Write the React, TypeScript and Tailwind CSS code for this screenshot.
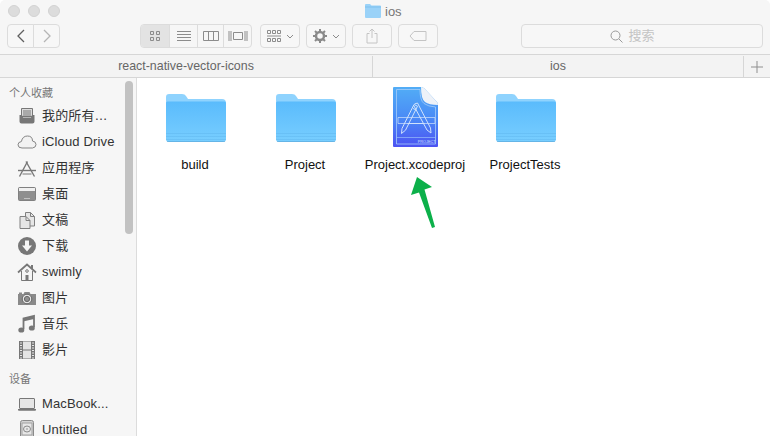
import type { ReactNode } from "react";

const cjk = "font-['Liberation_Sans','Noto_Sans_CJK_SC',sans-serif]";

function Folder() {
    return (
        <svg className="mt-[7px] ml-[2px]" width="60" height="48" viewBox="0 0 60 48">
            <defs>
                <linearGradient id="fb" x1="0" y1="0" x2="0" y2="1">
                    <stop offset="0" stopColor="#5abbfc" />
                    <stop offset="1" stopColor="#78ceff" />
                </linearGradient>
            </defs>
            <path d="M0 3q0-3 3-3h13q3 0 4 2l2 3h34q4 0 4 4v5H0z" fill="#8fd3fe" />
            <path d="M0 9q0-1.500 1.500-1.500h57q1.500 0 1.500 1.500v36q0 3-3 3H3q-3 0-3-3z" fill="url(#fb)" />
            <path d="M0 39.500h60M0 42.500h60M0 45.500h60" stroke="#5fb8ef" strokeWidth="0.800" opacity="0.600" />
            <path d="M1 47.500h58" stroke="#5aa6d8" strokeWidth="1" opacity="0.600" />
        </svg>
    );
}

function XcodeProj() {
    return (
        <svg className="ml-[1px]" width="46" height="60" viewBox="0 0 46 60">
            <defs>
                <linearGradient id="xg" x1="0" y1="0" x2="0" y2="1">
                    <stop offset="0" stopColor="#52adf6" />
                    <stop offset="0.500" stopColor="#4a8cf6" />
                    <stop offset="1" stopColor="#4c52f2" />
                </linearGradient>
            </defs>
            <path d="M1 0h27q2 0 3.500 1.500L44 15q1 1 1 3v41q0 1-1 1H1q-1 0-1-1V1q0-1 1-1z" fill="url(#xg)" />
            <path d="M28 0q2 0 3.500 1.500L44 15q1 1 1 3-9 0-13-3t-4-15z" fill="#eef2f8" />
            <path d="M3.500 2.500H27q0 11 4 14t11.500 3.500v37h-39z" stroke="#a5cdfa" strokeWidth="0.800" fill="none" />
            <path d="M3.500 50.500h39" stroke="#a5cdfa" strokeWidth="0.600" />
            <g stroke="#d0e2fc" strokeWidth="1" fill="none">
                <path d="M5 30.500h37v6H5z" opacity="0.700" />
                <path d="M8.500 46.500l.500-5 12-24 3.500 1.700-12 24z" />
                <path d="M20 21.500l3.500 1.700" />
                <path d="M21.500 17l3-1 13 25 .500 5-4-3-13-24" />
                <path d="M14.500 36.500h17" />
            </g>
            <text x="42.500" y="55.500" textAnchor="end" fontSize="3.800" fontFamily="Liberation Sans" fill="#cfe0ff">PROJECT</text>
        </svg>
    );
}

const sidebarIcons: Record<string, ReactNode> = {
    all: (
        <svg width="20" height="20" viewBox="0 0 20 20">
            <path d="M4.500 2.500h11v8h-11z" fill="#dcdcdc" stroke="#777" />
            <path d="M6 5h8M6 7h8M6 9h8" stroke="#777" />
            <path d="M2.500 9h2.500l1 2.500h8l1-2.500h2.500v6.500q0 2-2 2h-11q-2 0-2-2z" fill="#777" />
        </svg>
    ),
    cloud: (
        <svg width="20" height="20" viewBox="0 0 20 20">
            <path d="M5 16q-4 0-4-3.200 0-2.800 3.400-3.300Q5.500 4 10.500 4t5 5q3.500.500 3.500 3.500 0 3-3.500 3.500z" fill="#f2f2f2" stroke="#858585" />
        </svg>
    ),
    apps: (
        <svg width="20" height="20" viewBox="0 0 20 20">
            <g stroke="#777" fill="none" strokeWidth="1.400">
                <path d="M1 12.500h18" />
                <path d="M2.500 18.500l8-15" />
                <path d="M9 3.500l8.500 15" />
                <path d="M5.500 16h9" strokeWidth="1" />
            </g>
        </svg>
    ),
    desktop: (
        <svg width="20" height="20" viewBox="0 0 20 20">
            <rect x="1.500" y="3.500" width="17" height="13" rx="1" fill="#8f8f8f" stroke="#808080" />
            <rect x="2" y="4" width="16" height="3" fill="#f0f0f0" />
            <path d="M7.500 14.500h1M9.500 14.500h1M11.500 14.500h1" stroke="#f5f5f5" />
        </svg>
    ),
    docs: (
        <svg width="20" height="20" viewBox="0 0 20 20">
            <path d="M8.500 2.500h5l4 4v9.500h-9z" fill="#e6e6e6" stroke="#808080" />
            <path d="M3 6.500h6l4 4v8H3z" fill="#e6e6e6" stroke="#808080" />
            <path d="M13.500 2.500v4h4M9 6.500v4h4" fill="none" stroke="#808080" />
        </svg>
    ),
    download: (
        <svg width="20" height="20" viewBox="0 0 20 20">
            <circle cx="10" cy="10" r="9" fill="#777" />
            <path d="M8 4.500h4v5h3l-5 6-5-6h3z" fill="#f6f6f6" />
        </svg>
    ),
    home: (
        <svg width="20" height="20" viewBox="0 0 20 20">
            <path d="M4.500 9v9.500h11V9" fill="#f4f4f4" stroke="#777" />
            <path d="M1 10.500l9-8 9 8" fill="none" stroke="#777" strokeWidth="1.700" />
            <path d="M14 3h2v4h-2z" fill="#777" />
            <path d="M8.500 13h3v5.500h-3z" fill="#777" />
            <circle cx="10" cy="9" r="1.300" fill="none" stroke="#777" />
        </svg>
    ),
    photo: (
        <svg width="20" height="20" viewBox="0 0 20 20">
            <path d="M1 6h1V4.500h3V6h1.500l1-2h5l1 2H19v11H1z" fill="#8a8a8a" />
            <circle cx="10" cy="11" r="4.800" fill="#e4e4e4" stroke="#666" />
            <circle cx="10" cy="11" r="2.600" fill="#909090" stroke="#666" />
        </svg>
    ),
    music: (
        <svg width="20" height="20" viewBox="0 0 20 20">
            <path d="M6.500 15V4.500l10.500-2.500v11" fill="none" stroke="#777" strokeWidth="1.800" />
            <path d="M6 4.500l11-2.500v3L6 7.500z" fill="#777" />
            <ellipse cx="4.300" cy="16" rx="3" ry="2.600" fill="#777" />
            <ellipse cx="14.800" cy="14" rx="3" ry="2.600" fill="#777" />
        </svg>
    ),
    film: (
        <svg width="20" height="20" viewBox="0 0 20 20">
            <rect x="2" y="1" width="16" height="18" fill="#777" />
            <path d="M6 1.500h8v8H6zM6 10.500h8v8H6z" fill="#e4e4e4" />
            <path d="M3 3h2M3 5.500h2M3 8h2M3 10.500h2M3 13h2M3 15.500h2M3 18h2M15 3h2M15 5.500h2M15 8h2M15 10.500h2M15 13h2M15 15.500h2M15 18h2" stroke="#e8e8e8" />
        </svg>
    ),
    laptop: (
        <svg width="20" height="20" viewBox="0 0 20 20">
            <rect x="2.500" y="4.500" width="15" height="10" rx="0.500" fill="#e6e6e6" stroke="#777" />
            <path d="M1 15h18v1q0 .800-1 .800H2q-1 0-1-.800z" fill="#777" />
        </svg>
    ),
    disk: (
        <svg width="20" height="20" viewBox="0 0 20 20">
            <rect x="3.500" y="0.500" width="13" height="21" rx="2" fill="#d4d4d4" stroke="#8a8a8a" />
            <rect x="5" y="3" width="10" height="12" fill="#e6e6e6" stroke="#a0a0a0" />
            <ellipse cx="10" cy="9" rx="3.500" ry="3" fill="none" stroke="#8a8a8a" />
            <circle cx="10" cy="9" r="0.800" fill="#8a8a8a" />
        </svg>
    ),
};

const favorites = [
    { icon: "all", label: "我的所有…" },
    { icon: "cloud", label: "iCloud Drive" },
    { icon: "apps", label: "应用程序" },
    { icon: "desktop", label: "桌面" },
    { icon: "docs", label: "文稿" },
    { icon: "download", label: "下载" },
    { icon: "home", label: "swimly" },
    { icon: "photo", label: "图片" },
    { icon: "music", label: "音乐" },
    { icon: "film", label: "影片" },
];

const devices = [
    { icon: "laptop", label: "MacBook..." },
    { icon: "disk", label: "Untitled" },
];

function SidebarRow({ icon, label }: { icon: string; label: string }) {
    return (
        <div className="flex h-[26px] shrink-0 items-center pl-[17px]">
            <span className="flex w-[25px] shrink-0">{sidebarIcons[icon]}</span>
            <span className="text-[13px] tracking-[0.15px] whitespace-nowrap text-[#333]">{label}</span>
        </div>
    );
}

function ToolButton({ className, children }: { className: string; children: ReactNode }) {
    return (
        <div className={`flex h-6 items-center justify-center rounded-[4px] border border-[#dcdcdc] bg-[#f7f7f7] ${className}`}>
            {children}
        </div>
    );
}

function Toolbar() {
    return (
        <div className="flex h-[32px] items-start pt-[2px] pl-[7px]">
            <div className="flex">
                <ToolButton className="w-[27px] rounded-r-none">
                    <svg width="12" height="16" viewBox="0 0 12 16"><path d="M9 2L3 8l6 6" fill="none" stroke="#5f5f5f" strokeWidth="1.300" /></svg>
                </ToolButton>
                <ToolButton className="ml-[-1px] w-[27px] rounded-l-none">
                    <svg width="12" height="16" viewBox="0 0 12 16"><path d="M3 2l6 6-6 6" fill="none" stroke="#b5b5b5" strokeWidth="1.300" /></svg>
                </ToolButton>
            </div>

            <div className="ml-[80px] flex h-6 w-[112px] overflow-hidden rounded-[4px] border border-[#dcdcdc]">
                <div className="flex w-[28px] items-center justify-center bg-[#e3e3e3]">
                    <svg width="12" height="12" viewBox="0 0 12 12"><path d="M1.500 1.500h3v3h-3zM7.500 1.500h3v3h-3zM1.500 7.500h3v3h-3zM7.500 7.500h3v3h-3z" fill="none" stroke="#8c8c8c" /></svg>
                </div>
                <div className="flex w-[28px] items-center justify-center border-l border-[#dcdcdc]">
                    <svg width="16" height="12" viewBox="0 0 16 12"><path d="M1 1.500h14M1 4.500h14M1 7.500h14M1 10.500h14" stroke="#8c8c8c" /></svg>
                </div>
                <div className="flex w-[26px] items-center justify-center border-l border-[#dcdcdc]">
                    <svg width="18" height="12" viewBox="0 0 18 12"><path d="M1.500 1.500h15v9h-15zM6.500 1.500v9M11.500 1.500v9" fill="none" stroke="#8c8c8c" /></svg>
                </div>
                <div className="flex flex-1 items-center justify-center border-l border-[#dcdcdc]">
                    <svg width="20" height="12" viewBox="0 0 20 12"><path d="M5.500 2.500h9v7h-9zM1 1v10M3 1v10M17 1v10M19 1v10" fill="none" stroke="#8c8c8c" /></svg>
                </div>
            </div>

            <ToolButton className="ml-[8px] w-[40px] gap-[5px]">
                <svg width="14" height="12" viewBox="0 0 14 12"><path d="M.500.500h3v3h-3zM5.500.500h3v3h-3zM10.500.500h3v3h-3zM.500 8.500h3v3h-3zM5.500 8.500h3v3h-3zM10.500 8.500h3v3h-3zM0 6h14" fill="none" stroke="#8c8c8c" /></svg>
                <svg width="8" height="5" viewBox="0 0 8 5"><path d="M1 1l3 3 3-3" fill="none" stroke="#8c8c8c" /></svg>
            </ToolButton>

            <ToolButton className="ml-[6px] w-[40px] gap-[5px]">
                <svg width="14" height="14" viewBox="0 0 14 14">
                    <circle cx="7" cy="7" r="4" fill="none" stroke="#8a8a8a" strokeWidth="2.500" />
                    <path d="M7 0v3M7 11v3M0 7h3M11 7h3M2 2l2 2M10 10l2 2M12 2l-2 2M4 10l-2 2" stroke="#8a8a8a" strokeWidth="2" />
                </svg>
                <svg width="8" height="5" viewBox="0 0 8 5"><path d="M1 1l3 3 3-3" fill="none" stroke="#8c8c8c" /></svg>
            </ToolButton>

            <ToolButton className="ml-[6px] w-[40px]">
                <svg width="12" height="16" viewBox="0 0 12 16"><path d="M3.500 5.500H1v9.500h10V5.500H8.500M6 10V1M3.500 3.500L6 1l2.500 2.500" fill="none" stroke="#c4c4c4" /></svg>
            </ToolButton>

            <ToolButton className="ml-[6px] w-[40px]">
                <svg width="18" height="10" viewBox="0 0 18 10"><path d="M5 .500h12v9H5L1 5z" fill="none" stroke="#c4c4c4" /></svg>
            </ToolButton>

            <ToolButton className="ml-[83px] w-[242px] gap-[5px] pr-[19px]">
                <svg width="13" height="13" viewBox="0 0 13 13"><circle cx="5.500" cy="5.500" r="4.500" fill="none" stroke="#9a9a9a" /><path d="M9 9l3.500 3.500" stroke="#9a9a9a" /></svg>
                <span className="text-[13px] text-[#c4c4c4]">搜索</span>
            </ToolButton>
        </div>
    );
}

function GridItem({ label, children }: { label: string; children: ReactNode }) {
    return (
        <div className="flex w-[110px] flex-col items-center">
            <div className="flex h-[60px] items-start">{children}</div>
            <span className="mt-[10px] text-[13px] leading-[16px] whitespace-nowrap text-[#111]">{label}</span>
        </div>
    );
}

export default function App() {
    return (
        <div className={`relative flex h-[436px] w-[770px] flex-col overflow-hidden bg-white ${cjk}`}>
            <header className="h-[54px] shrink-0 rounded-t-[5px] bg-[#f6f6f6]">
                <div className="relative flex h-[22px] items-center">
                    <div className="ml-[8px] flex gap-2">
                        <span className="h-3 w-3 rounded-full border border-[#d2d2d2] bg-[#dcdcdc]" />
                        <span className="h-3 w-3 rounded-full border border-[#d2d2d2] bg-[#dcdcdc]" />
                        <span className="h-3 w-3 rounded-full border border-[#d2d2d2] bg-[#dcdcdc]" />
                    </div>
                    <div className="ml-[305px] flex items-center gap-[4px]">
                        <svg width="16" height="14" viewBox="0 0 16 14">
                            <path d="M0 1q0-1 1-1h4l1.500 1.500H15q1 0 1 1V13q0 1-1 1H1q-1 0-1-1z" fill="#9ad2f8" />
                            <path d="M0 3h16" stroke="#7cc0ee" />
                        </svg>
                        <span className="pt-[1px] text-[13px] text-[#777]">ios</span>
                    </div>
                </div>
                <Toolbar />
            </header>

            <div className="flex h-[24px] shrink-0 border-y border-[#d6d6d6] bg-[#f3f3f3] pt-[1px] text-[12.400px] text-[#666]">
                <div className="flex w-[373px] items-center justify-center border-r border-[#d6d6d6]">react-native-vector-icons</div>
                <div className="flex w-[370px] items-center justify-center">ios</div>
                <div className="flex flex-1 items-center justify-center border-l border-[#d6d6d6]">
                    <svg width="12" height="12" viewBox="0 0 12 12"><path d="M6 0v12M0 6h12" stroke="#8f8f8f" /></svg>
                </div>
            </div>

            <div className="flex min-h-0 flex-1">
                <aside className="relative w-[137px] shrink-0 overflow-hidden border-r border-[#dcdcdc] bg-[#f6f6f6]">
                    <div className="flex flex-col pt-[7px]">
                        <div className="h-[18px] pl-[9px] text-[11px] leading-[16px] text-[#777]">个人收藏</div>
                        {favorites.map((item) => (
                            <SidebarRow key={item.label} {...item} />
                        ))}
                        <div className="mt-[8px] h-[20px] pl-[9px] text-[11px] leading-[16px] text-[#777]">设备</div>
                        {devices.map((item) => (
                            <SidebarRow key={item.label} {...item} />
                        ))}
                    </div>
                    <div className="absolute top-[3px] left-[125px] h-[153px] w-[8px] rounded-full bg-[#c2c2c2]" />
                </aside>

                <main className="flex flex-1 items-start pt-[9px] pl-[3px]">
                    <GridItem label="build"><Folder /></GridItem>
                    <GridItem label="Project"><Folder /></GridItem>
                    <GridItem label="Project.xcodeproj"><XcodeProj /></GridItem>
                    <GridItem label="ProjectTests"><Folder /></GridItem>
                </main>
            </div>

            {/* annotation arrow drawn on top of the window */}
            <svg className="absolute top-[170px] left-[405px]" width="40" height="65" viewBox="0 0 40 65">
                <path d="M12 7L27 17 19.500 19.500 30 57 27 58 14 22.500 6 25z" fill="#0cb04a" />
            </svg>
        </div>
    );
}
